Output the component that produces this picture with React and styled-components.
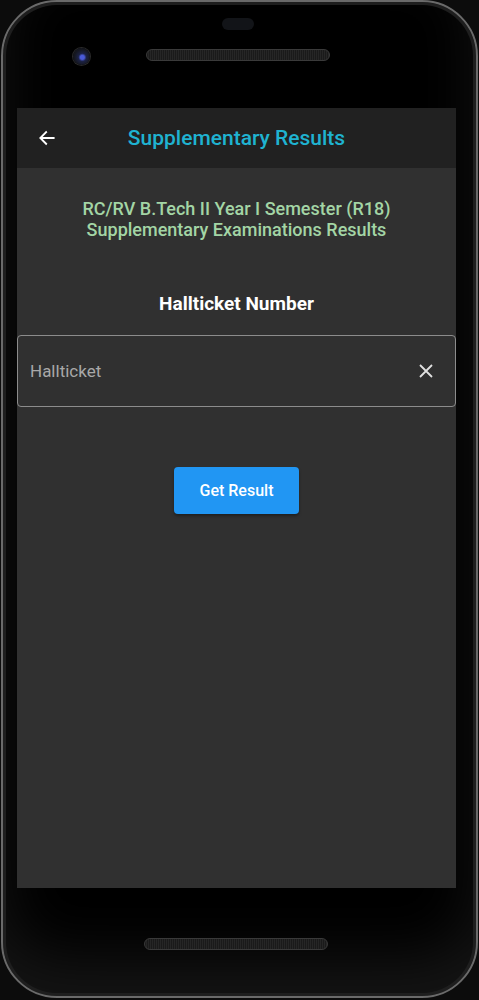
import React from "react";
import styled, { createGlobalStyle } from "styled-components";

const GlobalStyle = createGlobalStyle`
  html, body {
    margin: 0;
    padding: 0;
    background: #0c0c0c;
  }
  body {
    font-family: Roboto, "Noto Sans", Arial, sans-serif;
  }
`;

const Phone = styled.div`
  box-sizing: border-box;
  width: 477px;
  height: 998px;
  margin: 0 1px;
  border-radius: 56px;
  border: 2px solid #6a6a6a;
  box-shadow: inset 0 0 0 3px #1e1e1e, inset 0 -40px 60px rgba(40, 40, 40, 0.5);
  background: #000;
  display: flex;
  flex-direction: column;
  align-items: stretch;
  overflow: hidden;
`;

const TopBezel = styled.div`
  height: 106px;
  position: relative;
`;

const Sensor = styled.div`
  position: absolute;
  top: 16px;
  left: 219px;
  width: 32px;
  height: 12px;
  border-radius: 6px;
  background: #121418;
`;

const Camera = styled.div`
  position: absolute;
  top: 46px;
  left: 70px;
  width: 17px;
  height: 17px;
  border-radius: 50%;
  background: radial-gradient(circle at 55% 55%, #4a5ad8 0 2px, #1c2244 4px, #15171f 8px);
  box-shadow: 0 0 0 1px #2a2a2a;
`;

const Grille = styled.div`
  position: absolute;
  top: ${(p) => p.$top}px;
  left: ${(p) => p.$left}px;
  width: 182px;
  height: 10px;
  border-radius: 6px;
  border: 1px solid #3a3a3a;
  background: repeating-linear-gradient(90deg, #1a1a1a 0 1px, #262626 1px 2px);
`;

const Screen = styled.div`
  margin: 0 20px 0 14px;
  height: 780px;
  background: #303030;
  display: flex;
  flex-direction: column;
`;

const AppBar = styled.div`
  height: 60px;
  background: #212121;
  display: flex;
  align-items: center;
`;

const BackButton = styled.div`
  width: 60px;
  display: flex;
  justify-content: center;
  color: #fff;
`;

const Title = styled.div`
  flex: 1;
  text-align: center;
  padding-right: 60px;
  color: #1fb3d1;
  font-size: 21px;
  font-weight: 500;
`;

const Body = styled.div`
  display: flex;
  flex-direction: column;
  align-items: center;
  padding-top: 30px;
`;

const Subtitle = styled.div`
  color: #a3d5a5;
  font-size: 18px;
  line-height: 21px;
  text-align: center;
  font-weight: 500;
`;

const Label = styled.div`
  margin-top: 52px;
  color: #fff;
  font-size: 19px;
  font-weight: 700;
`;

const Field = styled.div`
  box-sizing: border-box;
  align-self: stretch;
  margin-top: 20px;
  height: 72px;
  border: 1px solid #8c8c8c;
  border-radius: 4px;
  display: flex;
  align-items: center;
  padding: 0 20px 0 12px;
`;

const Placeholder = styled.div`
  flex: 1;
  color: #a8a8a8;
  font-size: 17px;
`;

const Button = styled.button`
  margin-top: 60px;
  width: 125px;
  height: 47px;
  border: none;
  border-radius: 4px;
  background: #2196f3;
  color: #fff;
  font-family: inherit;
  font-size: 16px;
  font-weight: 500;
  box-shadow: 0 2px 3px rgba(0, 0, 0, 0.35);
`;

const BottomBezel = styled.div`
  flex: 1;
  position: relative;
`;

const ArrowIcon = () => (
  <svg width="20" height="20" viewBox="0 0 24 24" fill="none" stroke="#fff" strokeWidth="2.2" strokeLinecap="square">
    <path d="M20 12H5M11 5l-7 7 7 7" />
  </svg>
);

const CloseIcon = () => (
  <svg width="18" height="18" viewBox="0 0 24 24" fill="none" stroke="#e0e0e0" strokeWidth="2.4">
    <path d="M4 4l16 16M20 4L4 20" />
  </svg>
);

const App = () => {
  return (
    <>
      <GlobalStyle />
      <Phone>
        <TopBezel>
          <Sensor />
          <Camera />
          <Grille $top={47} $left={143} />
        </TopBezel>
        <Screen>
          <AppBar>
            <BackButton>
              <ArrowIcon />
            </BackButton>
            <Title>Supplementary Results</Title>
          </AppBar>
          <Body>
            <Subtitle>
              RC/RV B.Tech II Year I Semester (R18)
              <br />
              Supplementary Examinations Results
            </Subtitle>
            <Label>Hallticket Number</Label>
            <Field>
              <Placeholder>Hallticket</Placeholder>
              <CloseIcon />
            </Field>
            <Button>Get Result</Button>
          </Body>
        </Screen>
        <BottomBezel>
          <Grille $top={50} $left={141} />
        </BottomBezel>
      </Phone>
    </>
  );
};

export default App;
